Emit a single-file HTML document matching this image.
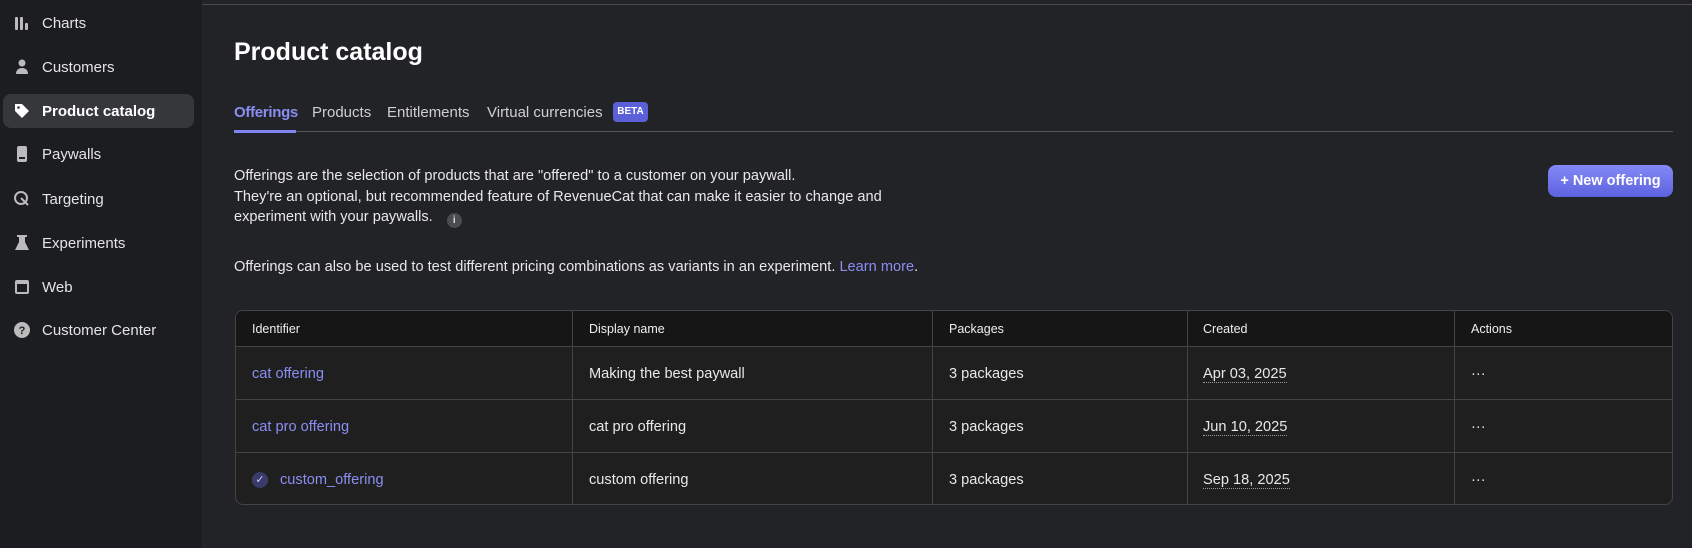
<!DOCTYPE html>
<html><head><meta charset="utf-8"><style>
*{box-sizing:border-box;margin:0;padding:0}
body{width:1692px;height:548px;overflow:hidden;background:#222326;font-family:"Liberation Sans",sans-serif;color:#e6e6e6;position:relative}
.side{position:absolute;left:0;top:0;width:202px;height:548px;background:#1c1d21}
.nav{position:absolute;left:3px;width:191px;height:34px;display:flex;align-items:center;font-size:15px;color:#e4e4e4}
.nav.act{background:#36373b;border-radius:8px;font-weight:bold;color:#fff}
.nav svg{position:absolute;left:10px;}
.nav span{position:absolute;left:39px}
.topline{position:absolute;left:202px;right:0;top:4px;height:1px;background:#4a4a4d}
h1{position:absolute;left:234px;top:38px;font-size:25px;font-weight:bold;color:#fff}
.tabs{position:absolute;left:234px;top:104px;font-size:15px;color:#cfcfcf}
.tabs span{position:absolute;white-space:nowrap}
.tabline{position:absolute;left:234px;top:131px;width:1439px;height:1px;background:#55565a}
.tabact{position:absolute;left:234px;top:130px;width:62px;height:3px;background:#7f84f0}
.beta{position:absolute;left:613px;top:102px;width:35px;height:20px;background:#5b60d9;border-radius:4px;font-size:10px;font-weight:bold;color:#fff;text-align:center;line-height:20px}
.p{position:absolute;left:234px;font-size:14.6px;color:#e8e8e8;white-space:nowrap}
.info{display:inline-block;width:15px;height:15px;border-radius:50%;background:#4b4c50;color:#ddd;font-size:10px;text-align:center;line-height:15px;margin-left:10px;vertical-align:-2px;font-weight:bold}
.btn{position:absolute;left:1548px;top:165px;width:125px;height:32px;border-radius:8px;background:linear-gradient(#8489f6,#5d62df);color:#fff;font-size:14.5px;font-weight:bold;display:flex;align-items:center;justify-content:center}
.tbl{position:absolute;left:235px;top:310px;width:1438px;height:195px;border:1px solid #444;border-radius:8px;overflow:hidden;background:#1f1f20}
.hd{position:absolute;left:0;top:0;width:100%;height:36px;background:#161617;border-bottom:1px solid #444}
.row{position:absolute;left:0;width:100%;height:53px;border-bottom:1px solid #444}
.vl{position:absolute;top:0;bottom:0;width:1px;background:#444}
.c{position:absolute;font-size:14.6px;white-space:nowrap;color:#e8e8e8}
.h{font-size:12.5px;color:#eee}
.lk{color:#8a8ef2}
.dt{border-bottom:1px dotted #999}
</style></head><body>
<div class="side">
<div class="nav" style="top:6px"><svg width="18" height="18" viewBox="0 0 18 18" fill="#bbb"><rect x="2" y="3" width="3" height="13" rx="1"/><rect x="7" y="3" width="3" height="13" rx="1"/><rect x="12" y="9" width="3" height="7" rx="1"/></svg><span>Charts</span></div>
<div class="nav" style="top:50px"><svg width="18" height="18" viewBox="0 0 18 18" fill="#bbb"><circle cx="9" cy="5" r="3.5"/><path d="M3 16c0-4 2.5-6 6-6s6 2 6 6z"/></svg><span>Customers</span></div>
<div class="nav act" style="top:94px"><svg width="18" height="18" viewBox="0 0 18 18" fill="#fff"><path d="M2 2h7l7 7-7 7-7-7z"/><circle cx="5.5" cy="5.5" r="1.3" fill="#36373b"/></svg><span>Product catalog</span></div>
<div class="nav" style="top:137px"><svg width="18" height="18" viewBox="0 0 18 18" fill="#bbb"><rect x="4" y="1" width="10" height="16" rx="2"/><rect x="6" y="12" width="6" height="2" fill="#1c1d21"/></svg><span>Paywalls</span></div>
<div class="nav" style="top:182px"><svg width="18" height="18" viewBox="0 0 18 18" fill="none" stroke="#bbb" stroke-width="2"><circle cx="8" cy="8" r="6"/><path d="M8 8l7 7" /></svg><span>Targeting</span></div>
<div class="nav" style="top:226px"><svg width="18" height="18" viewBox="0 0 18 18" fill="#bbb"><rect x="4" y="1" width="10" height="2"/><path d="M6 3h6v5l4 8H2l4-8z"/></svg><span>Experiments</span></div>
<div class="nav" style="top:270px"><svg width="18" height="18" viewBox="0 0 18 18" fill="#bbb"><rect x="2" y="2" width="14" height="14" rx="2"/><rect x="4" y="6" width="10" height="8" fill="#1c1d21"/></svg><span>Web</span></div>
<div class="nav" style="top:313px"><svg width="18" height="18" viewBox="0 0 18 18"><circle cx="9" cy="9" r="8" fill="#bbb"/><text x="9" y="13" font-size="11" font-weight="bold" text-anchor="middle" fill="#1c1d21" font-family="Liberation Sans">?</text></svg><span>Customer Center</span></div>
</div>
<div class="topline"></div>
<h1>Product catalog</h1>
<div class="tabs"><span style="left:0;color:#8a8ef2;font-weight:bold;letter-spacing:-0.3px">Offerings</span><span style="left:78px">Products</span><span style="left:153px">Entitlements</span><span style="left:253px">Virtual currencies</span></div>
<div class="beta">BETA</div>
<div class="tabline"></div><div class="tabact"></div>
<div class="p" style="top:168px">Offerings are the selection of products that are "offered" to a customer on your paywall.</div>
<div class="p" style="top:189px">They're an optional, but recommended feature of RevenueCat that can make it easier to change and</div>
<div class="p" style="top:209px">experiment with your paywalls. <span class="info">i</span></div>
<div class="p" style="top:259px">Offerings can also be used to test different pricing combinations as variants in an experiment. <span class="lk">Learn more</span>.</div>
<div class="btn">+ New offering</div>
<div class="tbl">
<div class="hd"></div>
<div class="row" style="top:36px"></div><div class="row" style="top:89px"></div>
<div class="vl" style="left:336px"></div><div class="vl" style="left:696px"></div><div class="vl" style="left:951px"></div><div class="vl" style="left:1218px"></div>
<div class="c h" style="left:16px;top:11px">Identifier</div><div class="c h" style="left:353px;top:11px">Display name</div><div class="c h" style="left:713px;top:11px">Packages</div><div class="c h" style="left:967px;top:11px">Created</div><div class="c h" style="left:1235px;top:11px">Actions</div>
<div class="c lk" style="left:16px;top:55px">cat offering</div><div class="c" style="left:353px;top:55px">Making the best paywall</div><div class="c" style="left:713px;top:55px">3 packages</div><div class="c" style="left:967px;top:55px"><span class="dt">Apr 03, 2025</span></div><div class="c" style="left:1235px;top:55px">···</div>
<div class="c lk" style="left:16px;top:108px">cat pro offering</div><div class="c" style="left:353px;top:108px">cat pro offering</div><div class="c" style="left:713px;top:108px">3 packages</div><div class="c" style="left:967px;top:108px"><span class="dt">Jun 10, 2025</span></div><div class="c" style="left:1235px;top:108px">···</div>
<div class="c" style="left:16px;top:161px;width:16px;height:16px;border-radius:50%;background:#3a3b6a;color:#c8cbff;font-size:11px;text-align:center;line-height:16px">✓</div>
<div class="c lk" style="left:44px;top:161px">custom_offering</div><div class="c" style="left:353px;top:161px">custom offering</div><div class="c" style="left:713px;top:161px">3 packages</div><div class="c" style="left:967px;top:161px"><span class="dt">Sep 18, 2025</span></div><div class="c" style="left:1235px;top:161px">···</div>
</div>
</body></html>
